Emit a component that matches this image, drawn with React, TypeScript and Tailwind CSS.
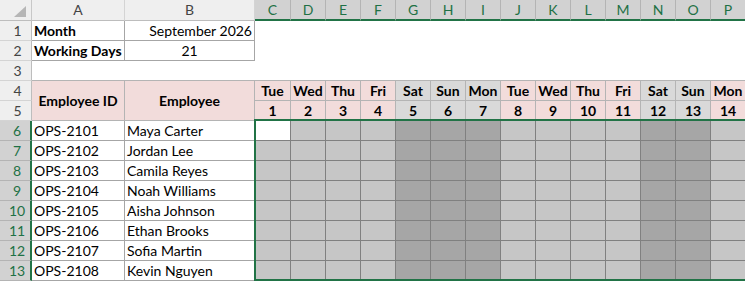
import React from "react";

const cols = ["C", "D", "E", "F", "G", "H", "I", "J", "K", "L", "M", "N", "O", "P"];
const days: [string, number, boolean][] = [
  ["Tue", 1, false],
  ["Wed", 2, false],
  ["Thu", 3, false],
  ["Fri", 4, false],
  ["Sat", 5, true],
  ["Sun", 6, true],
  ["Mon", 7, true],
  ["Tue", 8, false],
  ["Wed", 9, false],
  ["Thu", 10, false],
  ["Fri", 11, false],
  ["Sat", 12, true],
  ["Sun", 13, true],
  ["Mon", 14, false],
];
const emps: [string, string][] = [
  ["OPS-2101", "Maya Carter"],
  ["OPS-2102", "Jordan Lee"],
  ["OPS-2103", "Camila Reyes"],
  ["OPS-2104", "Noah Williams"],
  ["OPS-2105", "Aisha Johnson"],
  ["OPS-2106", "Ethan Brooks"],
  ["OPS-2107", "Sofia Martin"],
  ["OPS-2108", "Kevin Nguyen"],
];

function RowHdr({ n, sel }: { n: number; sel?: boolean }) {
  return sel ? (
    <div className="flex items-center justify-center pl-[4px] bg-[#d2d2d2] text-[#1e7145] border-b border-b-[#b4b4b4] border-r-2 border-r-[#217346]">
      {n}
    </div>
  ) : (
    <div className="flex items-center justify-center pl-[4px] bg-[#efefef] text-[#444444] border-b border-b-[#d4d4d4] border-r border-r-[#bdbdbd]">
      {n}
    </div>
  );
}

export default function App() {
  return (
    <div
      className="relative w-[745px] h-[281px] overflow-hidden bg-white text-[14px] leading-none text-black"
      style={{ fontFamily: "Lato, 'Open Sans', sans-serif" }}
    >
      <div className="grid grid-cols-[32px_93px_130px_36px_repeat(13,35px)] grid-rows-[21px_repeat(13,20px)]">
        {/* column header row */}
        <div className="relative bg-[#efefef] border-r border-r-[#c8c8c8] border-b border-b-[#bdbdbd] flex items-end justify-end pr-[5px] pb-[3px]">
          <svg width="12" height="11" viewBox="0 0 12 11">
            <polygon points="12,0 12,11 0,11" fill="#b6b6b6" />
          </svg>
        </div>
        <div className="flex items-center justify-center bg-[#efefef] text-[#444444] border-r border-r-[#d4d4d4] border-b border-b-[#bdbdbd]">
          A
        </div>
        <div className="flex items-center justify-center bg-[#efefef] text-[#444444] border-r border-r-[#d4d4d4] border-b border-b-[#bdbdbd]">
          B
        </div>
        {cols.map((c) => (
          <div
            key={c}
            className="flex items-center justify-center bg-[#d2d2d2] text-[#1e7145] border-r border-r-[#b4b4b4] border-b-2 border-b-[#217346]"
          >
            {c}
          </div>
        ))}

        {/* row 1 */}
        <RowHdr n={1} />
        <div className="flex items-center pl-[2px] font-bold border-r border-b border-[#a6a6a6]">Month</div>
        <div className="flex items-center justify-end pr-[2px] border-r border-b border-[#a6a6a6]">September 2026</div>
        <div className="col-[4/18]" />

        {/* row 2 */}
        <RowHdr n={2} />
        <div className="flex items-center pl-[2px] font-bold border-r border-b border-[#a6a6a6]">Working Days</div>
        <div className="flex items-center justify-center border-r border-b border-[#a6a6a6]">21</div>
        <div className="col-[4/18]" />

        {/* row 3 */}
        <RowHdr n={3} />
        <div className="col-[2/18] border-b border-[#b4b4b4]" />

        {/* row 4 */}
        <RowHdr n={4} />
        <div className="row-span-2 flex items-center justify-center font-bold bg-[#f2dcdb] border-r border-b border-[#b4b4b4]">
          Employee ID
        </div>
        <div className="row-span-2 flex items-center justify-center font-bold bg-[#f2dcdb] border-r border-b border-[#b4b4b4]">
          Employee
        </div>
        {days.map(([d, n, we]) => (
          <div
            key={"d" + n}
            className={
              "flex items-center justify-center font-bold border-r border-b border-[#b4b4b4] " +
              (we ? "bg-[#d9d9d9]" : "bg-[#f2dcdb]")
            }
          >
            {d}
          </div>
        ))}

        {/* row 5 */}
        <RowHdr n={5} />
        {days.map(([, n, we]) => (
          <div
            key={"n" + n}
            className={
              "flex items-center justify-center font-bold border-r border-b border-[#b4b4b4] " +
              (we ? "bg-[#d9d9d9]" : "bg-[#f2dcdb]")
            }
          >
            {n}
          </div>
        ))}

        {/* rows 6-13 */}
        {emps.map(([id, name], r) => (
          <React.Fragment key={id}>
            <RowHdr n={6 + r} sel />
            <div className="flex items-center pl-[2px] border-r border-b border-[#a6a6a6]">{id}</div>
            <div className="flex items-center pl-[2px] border-r border-b border-[#a6a6a6]">{name}</div>
            {days.map(([, n, we]) => (
              <div
                key={id + n}
                className={
                  "border-r border-b border-[#808080] " +
                  (r === 0 && n === 1 ? "bg-white" : we ? "bg-[#a6a6a6]" : "bg-[#c6c6c6]")
                }
              />
            ))}
          </React.Fragment>
        ))}
      </div>

      {/* selection outline */}
      <div className="absolute left-[254px] top-[119px] w-[600px] h-[162px] border-2 border-[#217346] pointer-events-none" />
    </div>
  );
}
